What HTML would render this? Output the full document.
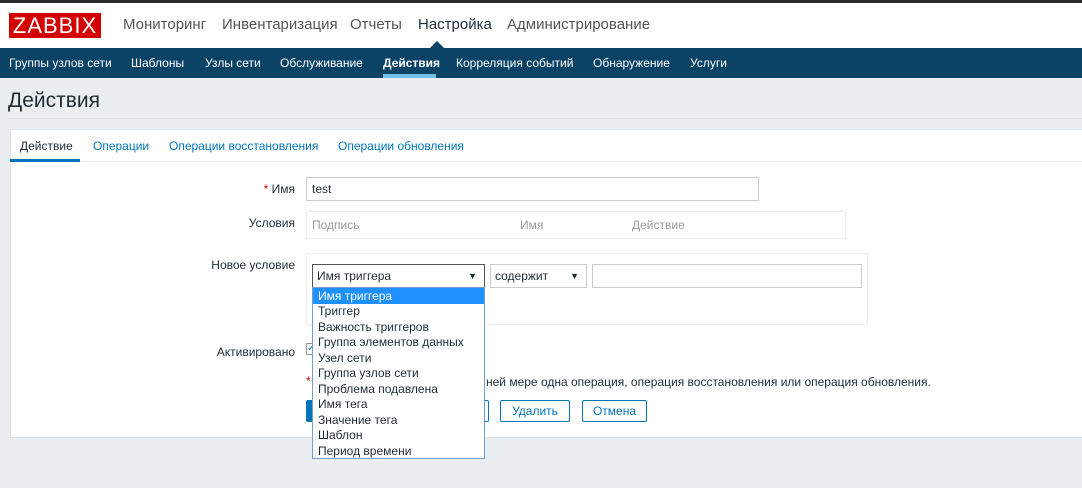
<!DOCTYPE html>
<html><head><meta charset="utf-8"><style>
*{box-sizing:border-box;margin:0;padding:0}
body{width:1082px;height:488px;overflow:hidden;background:#ebeef0;font-family:"Liberation Sans",Arial,sans-serif;font-size:12px;color:#1f2c33;position:relative}
.a{position:absolute}
.top{left:0;top:0;width:1082px;height:3px;background:#2b2b2b}
.hdr{left:0;top:3px;width:1082px;height:45px;background:#fff}
.logo{left:9px;top:13px;width:92px;height:25px;background:#d40000;color:#fff;font-size:22px;line-height:25px;text-align:center;letter-spacing:1px}
.m{top:16px;font-size:15px;color:#555}
.nav{left:0;top:48px;width:1082px;height:30px;background:#0b4367}
.n{top:56px;font-size:12px;color:#fff}
.panel{left:10px;top:129px;width:1072px;height:309px;background:#fff;border:1px solid #dfe4e7;border-right:none}
.lbl{font-size:12px;color:#1f2c33;text-align:right;width:200px}
.inp{border:1px solid #ccc;background:#fff}
.opt{left:5px;font-size:12px;color:#1f2c33;height:15.5px;line-height:15.5px}
.btn{border:1px solid #0275b8;border-radius:2px;color:#0275b8;text-align:center;line-height:20px;height:22px;background:#fff}
.arr{position:absolute;right:7px;top:6px;font-size:9px}
</style></head><body>
<div class="a top"></div>
<div class="a hdr"></div>
<div class="a logo">ZABBIX</div>
<div class="a m" style="left:123px">Мониторинг</div>
<div class="a m" style="left:222px">Инвентаризация</div>
<div class="a m" style="left:350px">Отчеты</div>
<div class="a m" style="left:418px;color:#1f2c33">Настройка</div>
<div class="a m" style="left:507px">Администрирование</div>
<div class="a" style="left:430px;top:41px;width:0;height:0;border-left:7px solid transparent;border-right:7px solid transparent;border-bottom:7px solid #0b4367"></div>
<div class="a nav"></div>
<div class="a n" style="left:9px">Группы узлов сети</div>
<div class="a n" style="left:131px">Шаблоны</div>
<div class="a n" style="left:205px">Узлы сети</div>
<div class="a n" style="left:280px">Обслуживание</div>
<div class="a n" style="left:383px;font-weight:bold">Действия</div>
<div class="a" style="left:383px;top:74px;width:53px;height:4px;background:#74bfe8"></div>
<div class="a n" style="left:456px">Корреляция событий</div>
<div class="a n" style="left:593px">Обнаружение</div>
<div class="a n" style="left:690px">Услуги</div>
<div class="a" style="left:8px;top:89px;font-size:21px;color:#1f2c33">Действия</div>
<div class="a" style="left:8px;top:118px;width:1074px;height:1px;background:#dde2e5"></div>
<div class="a panel"></div>
<div class="a" style="left:11px;top:161px;width:1071px;height:1px;background:#e6e9eb"></div>
<div class="a" style="left:20px;top:139px;color:#1f2c33">Действие</div>
<div class="a" style="left:10px;top:159px;width:70px;height:3px;background:#0275b8"></div>
<div class="a" style="left:93px;top:139px;color:#0275b8">Операции</div>
<div class="a" style="left:169px;top:139px;color:#0275b8">Операции восстановления</div>
<div class="a" style="left:338px;top:139px;color:#0275b8">Операции обновления</div>

<div class="a lbl" style="left:95px;top:182px"><span style="color:#d40000">*</span> Имя</div>
<div class="a inp" style="left:306px;top:177px;width:453px;height:24px;padding:4px 5px">test</div>
<div class="a lbl" style="left:95px;top:216px">Условия</div>
<div class="a" style="left:306px;top:211px;width:540px;height:28px;border:1px solid #ebeef0"></div>
<div class="a" style="left:312px;top:218px;color:#999">Подпись</div>
<div class="a" style="left:520px;top:218px;color:#999">Имя</div>
<div class="a" style="left:632px;top:218px;color:#999">Действие</div>
<div class="a lbl" style="left:95px;top:258px">Новое условие</div>
<div class="a" style="left:306px;top:253px;width:562px;height:72px;border:1px solid #ebeef0"></div>
<div class="a inp" style="left:312px;top:264px;width:173px;height:24px;border-color:#555;padding:4px 4px">Имя триггера<span class="arr">▼</span></div>
<div class="a inp" style="left:490px;top:264px;width:97px;height:24px;padding:4px 4px">содержит<span class="arr">▼</span></div>
<div class="a inp" style="left:592px;top:264px;width:270px;height:24px"></div>
<div class="a lbl" style="left:95px;top:345px">Активировано</div>
<div class="a" style="left:306px;top:343px;width:12px;height:12px;border:1px solid #999;font-size:10px;line-height:10px;color:#0275b8">✓</div>
<div class="a" style="left:306px;top:374px;color:#d40000">*</div>
<div class="a" style="left:486px;top:375px">ней мере одна операция, операция восстановления или операция обновления.</div>
<div class="a" style="left:306px;top:400px;width:10px;height:22px;background:#0275b8;border-radius:2px"></div>
<div class="a btn" style="left:470px;top:400px;width:19px;border-left:none"></div>
<div class="a btn" style="left:500px;top:400px;width:70px">Удалить</div>
<div class="a btn" style="left:582px;top:400px;width:65px">Отмена</div>

<div class="a" style="left:312px;top:287px;width:173px;height:172px;background:#fff;border:1px solid #7a9cc6">
<div class="a" style="left:0;top:0;width:171px;height:16px;background:#1e90ff"></div>
<div class="a opt" style="top:1px;color:#fff">Имя триггера</div>
<div class="a opt" style="top:16px">Триггер</div>
<div class="a opt" style="top:31.5px">Важность триггеров</div>
<div class="a opt" style="top:47px">Группа элементов данных</div>
<div class="a opt" style="top:62.5px">Узел сети</div>
<div class="a opt" style="top:78px">Группа узлов сети</div>
<div class="a opt" style="top:93.5px">Проблема подавлена</div>
<div class="a opt" style="top:109px">Имя тега</div>
<div class="a opt" style="top:124.5px">Значение тега</div>
<div class="a opt" style="top:140px">Шаблон</div>
<div class="a opt" style="top:155.5px">Период времени</div>
</div>
</body></html>
